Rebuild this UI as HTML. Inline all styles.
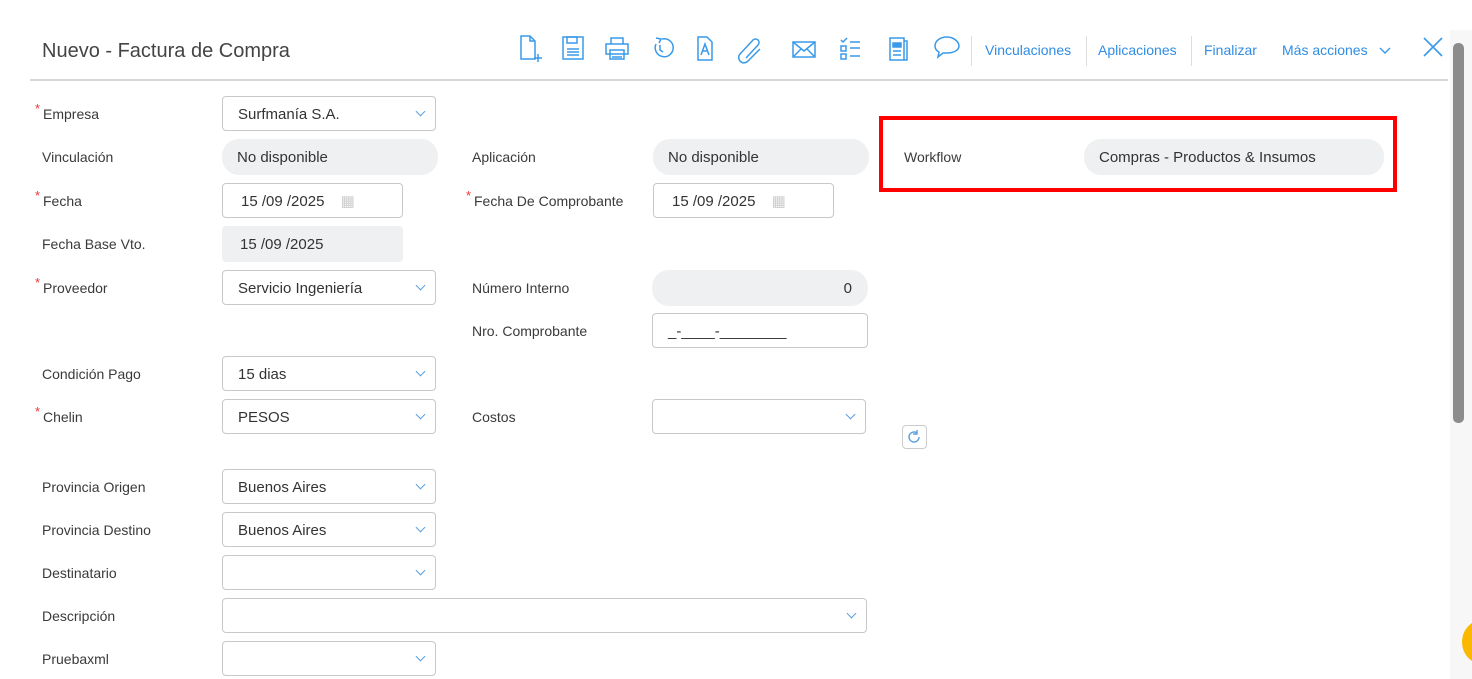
<!DOCTYPE html><html><head><meta charset="utf-8"><style>
body{margin:0;width:1472px;height:679px;overflow:hidden;background:#fff;font-family:"Liberation Sans",sans-serif;position:relative;color:#333}
.a{position:absolute}
.lb{position:absolute;font-size:14px;color:#3a3a3a;line-height:16px}
.req:before{content:"*";color:#e33;position:absolute;left:-8px;top:-5px;font-size:13px}
.in{position:absolute;border:1px solid #c8c8c8;border-radius:4px;box-sizing:border-box;height:35px;font-size:15px;line-height:35px;padding-left:15px;color:#333;background:#fff}
.ro{position:absolute;background:#eef0f2;border-radius:17px;box-sizing:border-box;height:36px;font-size:15px;line-height:38px;padding-left:15px;color:#333}
.sel:after{content:"";position:absolute;right:11px;top:11px;width:6px;height:6px;border-right:1.5px solid #5aa0e0;border-bottom:1.5px solid #5aa0e0;transform:rotate(45deg)}
.lk{position:absolute;top:42px;font-size:14px;color:#2f8de4}
.sp{position:absolute;top:36px;width:1px;height:30px;background:#ddd}
svg{position:absolute}
</style></head><body>
<div class="a" style="left:42px;top:40px;font-size:20px;color:#444">Nuevo - Factura de Compra</div>
<div class="a" style="left:30px;top:79px;width:1418px;height:2px;background:#d6d6d6"></div>
<svg width="480" height="40" style="left:510px;top:30px" fill="none" stroke="#3a9ae8" stroke-width="1.5">
<path d="M11 6h9l5 5v18h-14z M20 6v5h5"/><path d="M28 24v8M24 28h8"/>
<rect x="53" y="7" width="20" height="22"/><rect x="57" y="7" width="10" height="6"/><path d="M57 19h12M57 22h12M57 25h12"/>
<path d="M101 14v-6h12v6 M96 14h22v10h-22z M100 20h14v9h-14z M102 24h10M102 27h10"/>
<path d="M146 14a9 9 0 1 0 6-5 M146 8l5 1-2 4 M150 15v5l3 2"/>
<path d="M188 7h9l5 5v18h-14z M191 25l4-11 4 11 M192 21h6"/>
<path d="M236 28l12-13a3 3 0 0 0-5-5l-13 14a5 5 0 0 0 8 7l12-12"/>
<rect x="283" y="12" width="22" height="15"/><path d="M283 12l11 9 11-9 M283 27l8-8 M305 27l-8-8"/>
<path d="M331 10l2 2 4-4 M331 16h5v5h-5z M331 24h5v5h-5z M340 12h10M340 18h10M340 26h10"/>
<path d="M380 8h14v22h-14z M394 11h3v19h-3" /><rect x="383" y="13" width="8" height="4" fill="#3a9ae8"/><path d="M383 21h8M383 25h8"/>
<path d="M437 7c-7 0-12 4-12 9 0 3 2 5 4 6l-1 5 5-4h4c7 0 12-3 12-7s-5-9-12-9z"/>
</svg>
<div class="sp" style="left:971px"></div>
<div class="lk" style="left:985px">Vinculaciones</div><div class="sp" style="left:1086px"></div>
<div class="lk" style="left:1098px">Aplicaciones</div><div class="sp" style="left:1191px"></div>
<div class="lk" style="left:1204px">Finalizar</div>
<div class="lk" style="left:1282px">Más acciones</div>
<svg width="14" height="10" style="left:1378px;top:46px"><path d="M2 2l5 5 5-5" stroke="#3a9ae8" fill="none" stroke-width="1.4"/></svg>
<svg width="22" height="22" style="left:1422px;top:36px"><path d="M2 2l18 18M20 2l-18 18" stroke="#3a9ae8" stroke-width="1.6"/></svg>
<div class="a" style="left:1450px;top:30px;width:22px;height:649px;background:#f7f7f7"></div>
<div class="a" style="left:1453px;top:43px;width:11px;height:380px;background:#8c8c8c;border-radius:5px"></div>
<div class="a" style="left:1462px;top:620px;width:40px;height:44px;border-radius:50%;background:#fbb800"></div>

<div class="lb req" style="left:43px;top:106px">Empresa</div><div class="in sel" style="left:222px;top:96px;width:214px">Surfmanía S.A.</div>
<div class="lb" style="left:42px;top:149px">Vinculación</div><div class="ro" style="left:222px;top:139px;width:216px">No disponible</div>
<div class="lb" style="left:472px;top:149px">Aplicación</div><div class="ro" style="left:653px;top:139px;width:216px">No disponible</div>
<div class="a" style="left:879px;top:116px;width:510px;height:68px;border:4px solid #f00"></div>
<div class="lb" style="left:904px;top:149px">Workflow</div><div class="ro" style="left:1084px;top:139px;width:300px">Compras - Productos &amp; Insumos</div>
<div class="lb req" style="left:43px;top:193px">Fecha</div><div class="in" style="left:222px;top:183px;width:181px;padding-left:18px">15 /09 /2025 <span style="color:#ccc;margin-left:12px">▦</span></div>
<div class="lb req" style="left:474px;top:193px">Fecha De Comprobante</div><div class="in" style="left:653px;top:183px;width:181px;padding-left:18px">15 /09 /2025 <span style="color:#ccc;margin-left:12px">▦</span></div>
<div class="lb" style="left:42px;top:236px">Fecha Base Vto.</div><div class="ro" style="left:222px;top:226px;width:181px;border-radius:4px;padding-left:18px">15 /09 /2025</div>
<div class="lb req" style="left:43px;top:280px">Proveedor</div><div class="in sel" style="left:222px;top:270px;width:214px">Servicio Ingeniería</div>
<div class="lb" style="left:472px;top:280px">Número Interno</div><div class="ro" style="left:652px;top:270px;width:216px;text-align:right;padding-right:16px">0</div>
<div class="lb" style="left:472px;top:323px">Nro. Comprobante</div><div class="in" style="left:652px;top:313px;width:216px">_-____-________</div>
<div class="lb" style="left:42px;top:366px">Condición Pago</div><div class="in sel" style="left:222px;top:356px;width:214px">15 dias</div>
<div class="lb req" style="left:43px;top:409px">Chelin</div><div class="in sel" style="left:222px;top:399px;width:214px">PESOS</div>
<div class="lb" style="left:472px;top:409px">Costos</div><div class="in sel" style="left:652px;top:399px;width:214px"></div>
<div class="a" style="left:902px;top:425px;width:23px;height:22px;border:1px solid #ccc;border-radius:4px"></div>
<svg width="18" height="18" style="left:905px;top:428px"><path d="M14 9a5 5 0 1 1-2-4 M12 2v4h-4" stroke="#5aa0e0" fill="none" stroke-width="1.4"/></svg>
<div class="lb" style="left:42px;top:479px">Provincia Origen</div><div class="in sel" style="left:222px;top:469px;width:214px">Buenos Aires</div>
<div class="lb" style="left:42px;top:522px">Provincia Destino</div><div class="in sel" style="left:222px;top:512px;width:214px">Buenos Aires</div>
<div class="lb" style="left:42px;top:565px">Destinatario</div><div class="in sel" style="left:222px;top:555px;width:214px"></div>
<div class="lb" style="left:42px;top:608px">Descripción</div><div class="in sel" style="left:222px;top:598px;width:645px"></div>
<div class="lb" style="left:42px;top:651px">Pruebaxml</div><div class="in sel" style="left:222px;top:641px;width:214px"></div>
</body></html>
